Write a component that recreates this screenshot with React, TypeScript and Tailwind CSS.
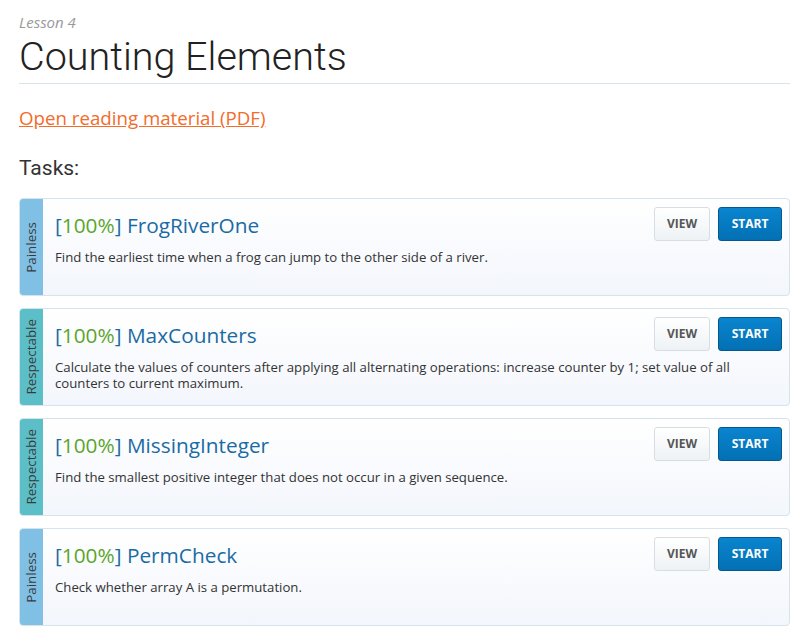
import React from 'react';

type Task = {
  level: 'Painless' | 'Respectable';
  name: string;
  description: string;
};

const TASKS: Task[] = [
  {
    level: 'Painless',
    name: 'FrogRiverOne',
    description: 'Find the earliest time when a frog can jump to the other side of a river.',
  },
  {
    level: 'Respectable',
    name: 'MaxCounters',
    description:
      'Calculate the values of counters after applying all alternating operations: increase counter by 1; set value of all counters to current maximum.',
  },
  {
    level: 'Respectable',
    name: 'MissingInteger',
    description: 'Find the smallest positive integer that does not occur in a given sequence.',
  },
  {
    level: 'Painless',
    name: 'PermCheck',
    description: 'Check whether array A is a permutation.',
  },
];

const openSans = "font-['Open_Sans',sans-serif]";
const roboto = "font-['Roboto',sans-serif]";

function TaskCard({ task }: { task: Task }) {
  const stripColor = task.level === 'Painless' ? 'bg-[#7fc0e4]' : 'bg-[#5cbfc7]';

  return (
    <div className="flex h-[98px] rounded-[4px] border border-[#d5e3ec] bg-gradient-to-b from-white to-[#f3f6fc] overflow-hidden">
      {/* Difficulty strip */}
      <div className={`w-[23px] shrink-0 flex items-center justify-center ${stripColor}`}>
        <span className={`${openSans} text-[13.4px] text-[#3a3a3a] [writing-mode:vertical-rl] rotate-180`}>
          {task.level}
        </span>
      </div>

      <div className="flex-1 pl-[12px] pr-[7px] pt-[8px]">
        <div className="flex items-center justify-between h-[34px]">
          <h4 className={`${openSans} text-[20.8px] text-[#1b6ba3] leading-none mt-[3px]`}>
            [<span className="text-[#5ca52b]">100%</span>] {task.name}
          </h4>
          <div className="flex gap-[8px]">
            <button
              className={`${openSans} w-[56px] h-[34px] rounded-[3px] border border-[#d6dee4] bg-gradient-to-b from-white to-[#eef2f5] text-[12px] font-bold text-[#555]`}
            >
              VIEW
            </button>
            <button
              className={`${openSans} w-[64px] h-[34px] rounded-[3px] border border-[#04588d] bg-gradient-to-b from-[#0a85cf] to-[#0370b4] text-[12px] font-bold text-white`}
            >
              START
            </button>
          </div>
        </div>
        <p className={`${openSans} text-[13.2px] leading-[15.5px] text-[#333] mt-[9px] pr-[40px]`}>
          {task.description}
        </p>
      </div>
    </div>
  );
}

export default function App() {
  return (
    <div className="w-[807px] h-[641px] bg-white px-[19px] pt-[12px] overflow-hidden">
      {/* Header */}
      <div className={`${openSans} italic text-[15px] leading-[20px] text-[#999]`}>Lesson 4</div>
      <h1 className={`${roboto} font-light text-[39.5px] leading-[46px] text-[#222] mt-[2px]`}>
        Counting Elements
      </h1>
      <div className="border-b border-[#d9e4ea] mt-[3px] mr-[-2px]" />

      <a
        href="#"
        className={`${openSans} block mt-[22px] text-[18.7px] leading-[24px] text-[#f26c2a] underline`}
      >
        Open reading material (PDF)
      </a>

      <h3 className={`${roboto} text-[21px] leading-[28px] text-[#333] mt-[24px]`}>Tasks:</h3>

      {/* Task cards */}
      <div className="flex flex-col gap-[12px] mt-[16px] mr-[-2px]">
        {TASKS.map((task) => (
          <TaskCard key={task.name} task={task} />
        ))}
      </div>
    </div>
  );
}
